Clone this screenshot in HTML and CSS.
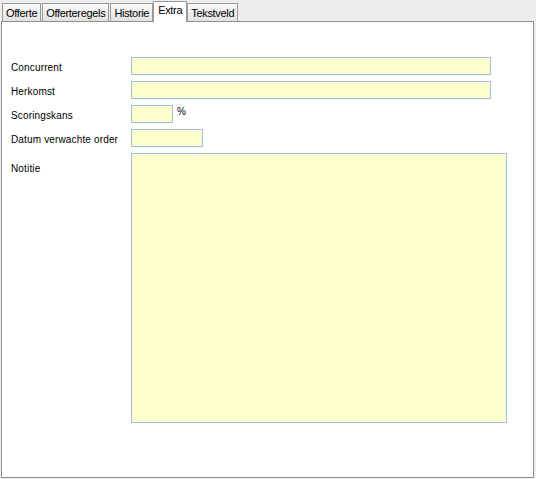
FILE: index.html
```html
<!DOCTYPE html>
<html>
<head>
<meta charset="utf-8">
<link rel="stylesheet" href="styles.css">
</head>
<body>
<div class="tabs">
  <div class="tab">Offerte</div>
  <div class="tab">Offerteregels</div>
  <div class="tab">Historie</div>
  <div class="tab active">Extra</div>
  <div class="tab">Tekstveld</div>
</div>
<div class="panel">
  <div class="form">
    <label class="lbl">Concurrent</label>
    <div class="field"><span class="input w-long"></span></div>
    <label class="lbl">Herkomst</label>
    <div class="field"><span class="input w-long"></span></div>
    <label class="lbl">Scoringskans</label>
    <div class="field"><span class="input w-small"></span><span class="unit">%</span></div>
    <label class="lbl">Datum verwachte order</label>
    <div class="field"><span class="input w-date"></span></div>
    <label class="lbl lbl-top">Notitie</label>
    <div class="field"><span class="input memo"></span></div>
  </div>
</div>
</body>
</html>
```

FILE: styles.css
```css
html, body {
  margin: 0;
  padding: 0;
  background: #eeeeee;
  width: 536px;
  height: 479px;
  overflow: hidden;
}
.tabs {
  display: flex;
  align-items: flex-end;
  height: 21px;
  padding-left: 2px;
  font-family: "Liberation Sans", Arial, sans-serif;
  font-size: 11px;
  color: #000;
}
.tab {
  height: 17px;
  line-height: 18px;
  padding: 0 3px;
  margin-right: 1px;
  border: 1px solid #9a9a9a;
  border-bottom: none;
  background: linear-gradient(#fbfbfb, #e2e2e2);
  letter-spacing: -0.32px;
}
.tab.active {
  height: 20px;
  line-height: 16px;
  margin: 0 0 -1px -1px;
  padding: 0 4px;
  background: #ffffff;
  position: relative;
  z-index: 2;
}
.panel {
  margin-left: 1px;
  width: 531px;
  height: 455px;
  border: 1px solid #8e8e8e;
  background: #ffffff;
  position: relative;
  z-index: 1;
}
.form {
  display: grid;
  grid-template-columns: 120px 1fr;
  row-gap: 6px;
  padding: 35px 0 0 9px;
  font-family: "Liberation Sans", Arial, sans-serif;
  font-size: 10px;
  letter-spacing: 0.15px;
  color: #000;
}
.lbl {
  display: flex;
  align-items: center;
  box-sizing: border-box;
  height: 18px;
  padding-top: 2px;
}
.lbl-top {
  align-self: start;
  height: 28px;
}
.field {
  display: flex;
  align-items: flex-start;
}
.input {
  display: block;
  box-sizing: border-box;
  height: 18px;
  background: #ffffcc;
  border: 1px solid #9fbbe8;
}
.w-long { width: 360px; }
.w-small { width: 42px; }
.w-date { width: 72px; }
.memo { width: 376px; height: 270px; }
.unit {
  margin-left: 4px;
  line-height: 14px;
}
```
